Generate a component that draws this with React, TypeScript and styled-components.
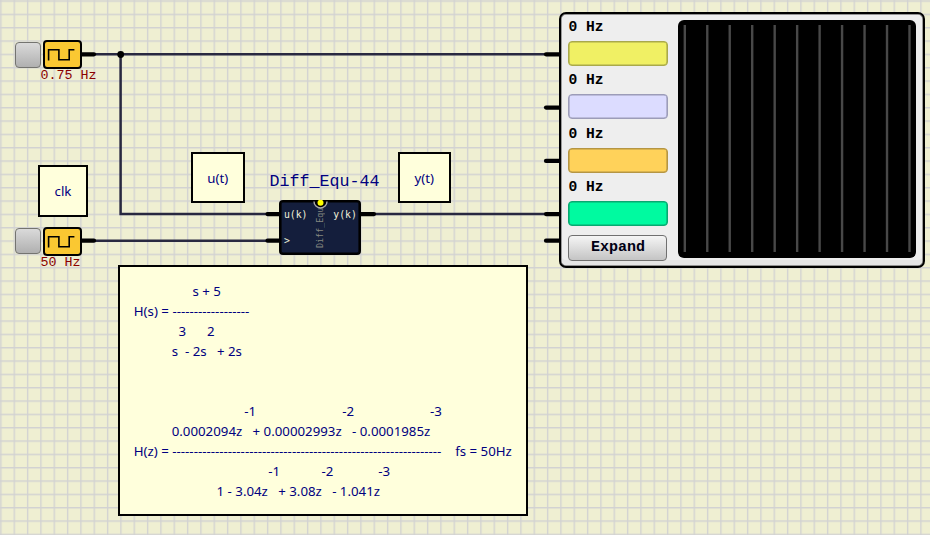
import React from "react";
import styled, { createGlobalStyle } from "styled-components";

const GlobalStyle = createGlobalStyle`
  body { margin: 0; overflow: hidden; }
`;

const Canvas = styled.main`
  position: relative;
  width: 930px;
  height: 535px;
  overflow: hidden;
  background: #efefd2;
`;

const Layer = styled.svg`
  position: absolute;
  inset: 0;
  width: 930px;
  height: 535px;
`;

const Item = styled.div<{ $x: number; $y: number }>`
  position: absolute;
  left: ${(p) => p.$x}px;
  top: ${(p) => p.$y}px;
`;

const Note = styled(Item)<{ $w: number; $h: number }>`
  box-sizing: border-box;
  width: ${(p) => p.$w}px;
  height: ${(p) => p.$h}px;
  border: 2px solid #000;
  background: #ffffdc;
  color: #000080;
  display: flex;
  align-items: center;
  justify-content: center;
  font: 13.28px/20px "Noto Sans", sans-serif;
`;

const Formula = styled.pre`
  margin: 0;
  font: inherit;
`;

const Clock = styled(Item)`
  display: flex;
  flex-direction: column;
`;

const ClockBody = styled.div`
  display: flex;
  align-items: center;
  gap: 2.6px;
  height: 29px;
`;

const Toggle = styled.button`
  box-sizing: border-box;
  width: 26px;
  height: 26px;
  padding: 0;
  border: 1px solid #747470;
  border-radius: 4px;
  background: linear-gradient(#dadada, #b0b0b0);
`;

const ClockFace = styled.div`
  box-sizing: border-box;
  width: 38.6px;
  height: 29px;
  border: 2px solid #000;
  border-radius: 4px;
  background: #fac832;
  svg { display: block; }
`;

const Frequency = styled.span`
  padding-left: 26px;
  color: #8b0000;
  font: 13.333px/14px "Liberation Mono", monospace;
  white-space: pre;
`;

const Title = styled(Item)`
  color: #000080;
  font: 16.667px/20px "Liberation Mono", monospace;
`;

const Chip = styled(Item)`
  box-sizing: border-box;
  width: 82px;
  height: 55px;
  border: 2px solid #000;
  border-radius: 4px;
  background: #141e3c;
  box-shadow: inset 0 0 0 0.6px #000;
  color: #f0f0d8;
  font: 9.8px/14px "DejaVu Sans Mono", monospace;
  display: grid;
  grid-template-columns: 1fr 14px 1fr;
  padding: 6px 2.5px 0;
`;

const Pins = styled.div<{ $right?: boolean }>`
  display: flex;
  flex-direction: column;
  gap: 12px;
  align-items: ${(p) => (p.$right ? "flex-end" : "flex-start")};
`;

const ChipName = styled.span`
  writing-mode: vertical-rl;
  transform: rotate(180deg);
  color: #858880;
  font: 8.4px/14px "DejaVu Sans Mono", monospace;
  height: 42px;
  margin-top: -2px;
`;

const Scope = styled(Item)`
  box-sizing: border-box;
  width: 366.4px;
  height: 256px;
  border: 2px solid #000;
  border-radius: 7px;
  background: #eee;
  box-shadow: inset 0 0 0 0.7px #777, inset 0 -6px #e5e5e5;
  display: flex;
  gap: 9.6px;
  padding: 6px 0 0 7.4px;
`;

const Channels = styled.div`
  display: flex;
  flex-direction: column;
  width: 100px;
`;

const Channel = styled.div`
  height: 53.333px;
`;

const Reading = styled.div`
  height: 21px;
  color: #000;
  font: bold 14.667px/15px "Liberation Mono", monospace;
`;

const Swatch = styled.div<{ $fill: string; $edge: string }>`
  box-sizing: border-box;
  width: 99.5px;
  height: 25px;
  border: 1px solid ${(p) => p.$edge};
  border-radius: 4px;
  background: ${(p) => p.$fill};
  box-shadow: inset 0 0 0 0.6px ${(p) => p.$edge};
`;

const Expand = styled.button`
  box-sizing: border-box;
  width: 99px;
  height: 26px;
  margin-top: 1.2px;
  padding: 0;
  border: 1px solid #707070;
  border-radius: 4px;
  background: linear-gradient(#f5f5f5, #c4c4c4);
  color: #000014;
  font: bold 15px/24px "Liberation Mono", monospace;
`;

const Screen = styled.div`
  width: 238px;
  height: 238px;
  border-radius: 6px;
  background: #000;
  svg { display: block; }
`;

const channels = [
  { fill: "#f0f064", edge: "#a9a94a" },
  { fill: "#dcdcff", edge: "#9c9cb8" },
  { fill: "#ffd25a", edge: "#b59543" },
  { fill: "#00faa0", edge: "#08a870" },
];

const wires = ["M94 54.3H548", "M120.6 54.3V214.1H268", "M94 240.7H268", "M374 214.1H548"];
const pins = [
  [81, 54.3, 94], [81, 240.7, 94],
  [267.5, 214.1, 281], [267.5, 240.7, 281], [361, 214.1, 374],
  [546, 54.3, 560], [546, 107.6, 560], [546, 160.9, 560], [546, 214.1, 560], [546, 240.7, 560],
];

const laplace = [
  " ".repeat(17) + "s + 5",
  "H(s) = " + "-".repeat(18),
  " ".repeat(13) + "3" + " ".repeat(6) + "2",
  " ".repeat(11) + "s  - 2s   + 2s",
];

const discrete = [
  " ".repeat(32) + "-1" + " ".repeat(25) + "-2" + " ".repeat(22) + "-3",
  " ".repeat(11) + "0.0002094z   + 0.00002993z   - 0.0001985z",
  "H(z) = " + "-".repeat(63) + "    fs = 50Hz",
  " ".repeat(39) + "-1" + " ".repeat(12) + "-2" + " ".repeat(13) + "-3",
  " ".repeat(24) + "1 - 3.04z   + 3.08z   - 1.041z",
];

const formula = [...laplace, " ", " ", ...discrete].join("\n");

function ClockSource({ y, label }: { y: number; label: string }) {
  return (
    <Clock $x={14.6} $y={y}>
      <ClockBody>
        <Toggle />
        <ClockFace>
          <svg width="34" height="25" viewBox="0 0 34 25">
            <path d="M3.6 18.5V7.7H13.9V17.7H24.2V7.7H29.4" fill="none" stroke="#000" strokeWidth="1.6" />
          </svg>
        </ClockFace>
      </ClockBody>
      <Frequency>{label}</Frequency>
    </Clock>
  );
}

export default function App() {
  return (
    <Canvas>
      <GlobalStyle />
      <Layer>
        <defs>
          <pattern id="grid" x="0.25" y="0.35" width="13.3333" height="13.3333" patternUnits="userSpaceOnUse">
            <path d="M0 .67H13.34M.67 0V13.34" stroke="#d2d2d2" strokeWidth="1.33" />
          </pattern>
        </defs>
        <rect width="930" height="535" fill="url(#grid)" />
        {wires.map((d) => (
          <path key={d} d={d} fill="none" stroke="#282840" strokeWidth="2.5" />
        ))}
        {pins.map(([x, y, end]) => (
          <path key={`${x}-${y}`} d={`M${x} ${y}H${end}`} stroke="#000" strokeWidth="4.2" strokeLinecap="round" />
        ))}
        <circle cx="120.7" cy="54.5" r="3.4" />
      </Layer>

      <ClockSource y={40} label="0.75 Hz" />
      <ClockSource y={226.5} label="50 Hz" />

      <Note $x={38} $y={165} $w={50} $h={52}>clk</Note>
      <Note $x={191} $y={152} $w={53.6} $h={51}>u(t)</Note>
      <Note $x={398} $y={152} $w={52.6} $h={51}>y(t)</Note>
      <Note $x={118} $y={265} $w={409.6} $h={251}>
        <Formula>{formula}</Formula>
      </Note>

      <Title $x={269.5} $y={172}>Diff_Equ-44</Title>
      <Chip $x={279.4} $y={200}>
        <Pins><span>u(k)</span><span>&gt;</span></Pins>
        <ChipName>Diff_Equ</ChipName>
        <Pins $right><span>y(k)</span></Pins>
      </Chip>
      <Layer>
        <path d="M314 201.5A6.4 6.4 0 0 0 327 201.5" fill="#000" stroke="#aaa" strokeWidth="1.4" />
        <circle cx="320.5" cy="202.7" r="3" fill="#ff0" />
      </Layer>

      <Scope $x={559} $y={12}>
        <Channels>
          {channels.map((c) => (
            <Channel key={c.fill}>
              <Reading>0 Hz</Reading>
              <Swatch $fill={c.fill} $edge={c.edge} />
            </Channel>
          ))}
          <Expand>Expand</Expand>
        </Channels>
        <Screen>
          <svg width="238" height="238">
            {Array.from({ length: 11 }, (_, i) => (
              <path key={i} d={`M${6.8 + i * 22.47} 5V232`} stroke="#484848" strokeWidth="2.4" />
            ))}
          </svg>
        </Screen>
      </Scope>
    </Canvas>
  );
}
